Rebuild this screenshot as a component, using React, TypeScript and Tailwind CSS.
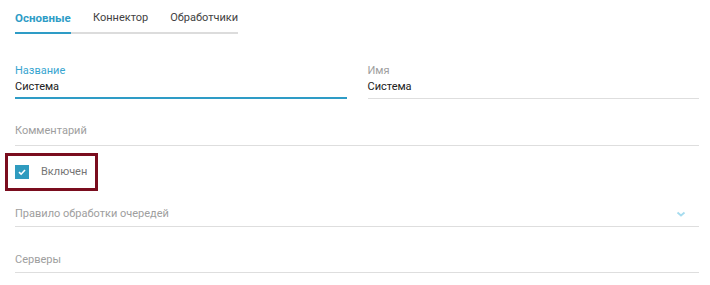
import React from "react";

const tabs = ["Основные", "Коннектор", "Обработчики"];

const Field = ({ label, value, focused }: { label: string; value: string; focused?: boolean }) => (
  <div
    className={`flex-1 flex flex-col ${
      focused ? "border-b-2 border-[#2e9cc6] pb-[3px]" : "border-b border-[#dedede] pb-[4px]"
    }`}
  >
    <span className={`leading-[14px] ${focused ? "text-[#37a5d0]" : "text-[#9e9e9e]"}`}>{label}</span>
    <span className="mt-[2px] leading-[14px] text-[#212121]">{value}</span>
  </div>
);

export default function App() {
  return (
    <div className="w-[710px] h-[285px] bg-white text-[11px] font-['Roboto',sans-serif] overflow-hidden">
      <div className="px-[15px]">
        <div className="inline-flex gap-[22px] border-b-2 border-[#dcdcdc] pt-[11px]">
          {tabs.map((t, i) => (
            <div
              key={t}
              className={`leading-[14px] pb-[7px] -mb-[2px] ${
                i === 0
                  ? "w-[56px] text-[11.5px] font-bold text-[#2e9cc6] border-b-2 border-[#2e9cc6]"
                  : "text-[#424242]"
              }`}
            >
              {t}
            </div>
          ))}
        </div>
      </div>

      <div className="pl-[15px] pr-[11px]">
        <div className="mt-[30px] flex gap-[21px]">
          <Field label="Название" value="Система" focused />
          <Field label="Имя" value="Система" />
        </div>

        <div className="mt-[25px] pb-[7px] border-b border-[#dedede] leading-[14px] text-[#9e9e9e]">
          Комментарий
        </div>

        <div className="mt-[7px] -ml-[10px] w-[93px] h-[38px] border-[3px] border-[#7a0d1e] flex items-center pl-[7px]">
          <div className="w-[14px] h-[14px] bg-[#2f9bbf] flex items-center justify-center">
            <svg width="10" height="10" viewBox="0 0 10 10">
              <path d="M2 5.2 L4.1 7.2 L8 3" fill="none" stroke="white" strokeWidth="1.6" />
            </svg>
          </div>
          <span className="ml-[12px] leading-[14px] text-[#757575]">Включен</span>
        </div>

        <div className="mt-[16px] pb-[5px] border-b border-[#dedede] flex items-center justify-between leading-[14px] text-[#9e9e9e]">
          <span>Правило обработки очередей</span>
          <svg width="10" height="8" viewBox="0 0 10 8" className="mr-[13px]">
            <path d="M1.5 2.5 L5 5.5 L8.5 2.5" fill="none" stroke="#a6dcef" strokeWidth="1.8" />
          </svg>
        </div>

        <div className="mt-[26px] pb-[5px] border-b border-[#dedede] leading-[14px] text-[#9e9e9e]">
          Серверы
        </div>
      </div>
    </div>
  );
}
